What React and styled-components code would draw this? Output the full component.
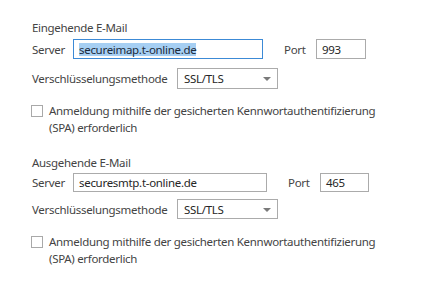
import React from "react";
import styled, { createGlobalStyle } from "styled-components";

const GlobalStyle = createGlobalStyle`
  html, body {
    margin: 0;
    padding: 0;
    background: #ffffff;
  }
  body {
    font-family: "Noto Sans", "Open Sans", sans-serif;
    font-size: 11.5px;
    letter-spacing: -0.3px;
    color: #444444;
  }
`;

const Page = styled.div`
  width: 438px;
  height: 302px;
  box-sizing: border-box;
  padding: 19px 0 0 32px;
  display: flex;
  flex-direction: column;
  gap: 18px;
`;

const Section = styled.section`
  display: flex;
  flex-direction: column;
`;

const Heading = styled.div`
  line-height: 17px;
  height: 17px;
  margin-bottom: ${(p) => p.gap}px;
`;

const Row = styled.div`
  display: flex;
  align-items: center;
  height: ${(p) => p.height}px;
  margin-bottom: ${(p) => p.gap || 0}px;
`;

const Label = styled.span`
  width: ${(p) => p.width}px;
  margin-left: ${(p) => p.offset || 0}px;
  flex-shrink: 0;
  line-height: 17px;
`;

const TextBox = styled.div`
  box-sizing: border-box;
  width: ${(p) => p.width}px;
  height: 100%;
  border: 1px solid ${(p) => (p.focused ? "#3c8ad6" : "#ababab")};
  background: #ffffff;
  padding-left: 5px;
  display: flex;
  align-items: center;
  color: #262626;
  font-size: 11.5px;
`;

const Selected = styled.span`
  background: #a6cff3;
  color: #1c2a3a;
  line-height: 13px;
`;

const Select = styled.div`
  box-sizing: border-box;
  width: 101px;
  height: 100%;
  border: 1px solid #ababab;
  background: #ffffff;
  display: flex;
  align-items: center;
  justify-content: space-between;
  padding: 0 6px 0 6px;
  color: #262626;
`;

const Arrow = styled.span`
  width: 0;
  height: 0;
  border-left: 4px solid transparent;
  border-right: 4px solid transparent;
  border-top: 4px solid #7a7a7a;
  margin-top: 1px;
`;

const CheckRow = styled.label`
  display: flex;
  align-items: flex-start;
  gap: 6px;
  margin-left: -1px;
  line-height: 17px;
`;

const Box = styled.span`
  box-sizing: border-box;
  width: 12px;
  height: 12px;
  border: 1px solid #a9a9a9;
  background: #ffffff;
  flex-shrink: 0;
  margin-top: 3px;
`;

const CheckText = styled.span`
  width: 352px;
`;

const sections = [
  {
    title: "Eingehende E-Mail",
    server: "secureimap.t-online.de",
    serverWidth: 190,
    portWidth: 50,
    port: "993",
    focused: true,
    headGap: 3,
    rowHeight: 20,
    rowGap: 9,
    selectGap: 13,
  },
  {
    title: "Ausgehende E-Mail",
    server: "securesmtp.t-online.de",
    serverWidth: 194,
    portWidth: 49,
    port: "465",
    focused: false,
    headGap: 2,
    rowHeight: 19,
    rowGap: 7,
    selectGap: 14,
  },
];

export default function App() {
  return (
    <>
      <GlobalStyle />
      <Page>
        {sections.map((s, i) => (
          <Section key={i}>
            <Heading gap={s.headGap}>{s.title}</Heading>
            <Row height={s.rowHeight} gap={s.rowGap}>
              <Label width={41}>Server</Label>
              <TextBox width={s.serverWidth} focused={s.focused}>
                {s.focused ? <Selected>{s.server}</Selected> : s.server}
              </TextBox>
              <Label width={32} offset={21}>
                Port
              </Label>
              <TextBox width={s.portWidth}>{s.port}</TextBox>
            </Row>
            <Row height={s.rowHeight + 1} gap={s.selectGap}>
              <Label width={145}>Verschlüsselungsmethode</Label>
              <Select>
                SSL/TLS
                <Arrow />
              </Select>
            </Row>
            <CheckRow>
              <Box />
              <CheckText>
                Anmeldung mithilfe der gesicherten Kennwortauthentifizierung
                (SPA) erforderlich
              </CheckText>
            </CheckRow>
          </Section>
        ))}
      </Page>
    </>
  );
}
